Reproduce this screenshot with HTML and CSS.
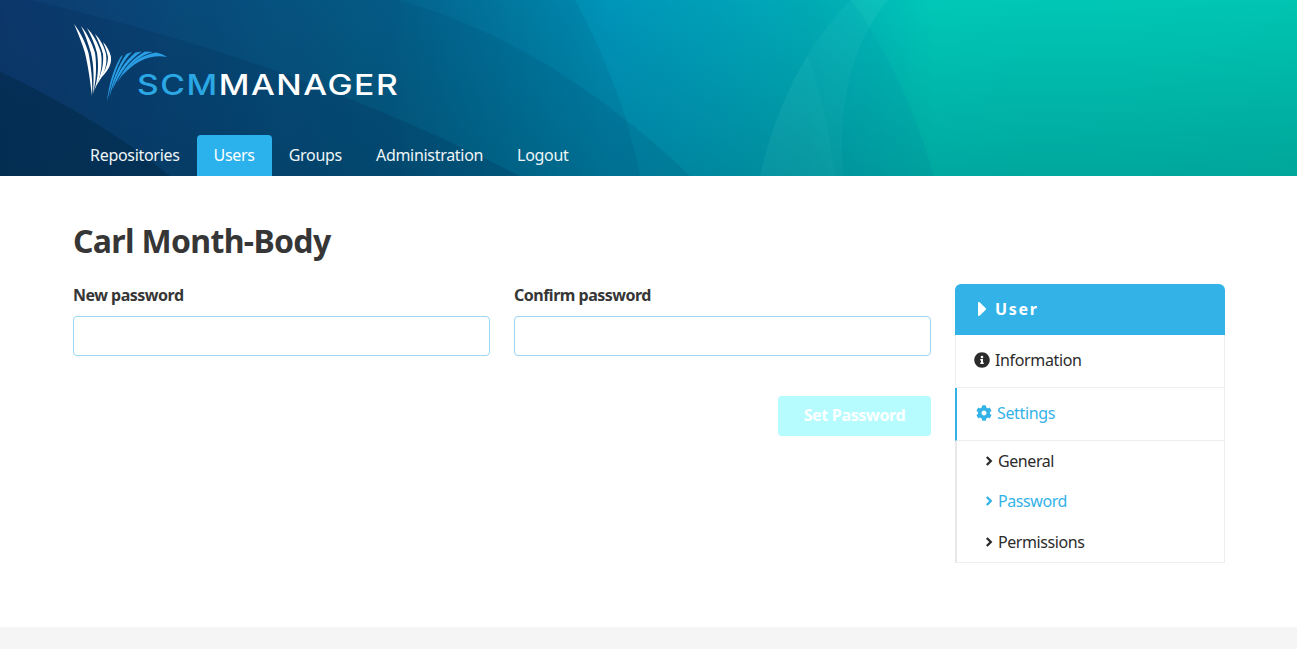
FILE: index.html

```html
<!DOCTYPE html>
<html lang="en">
<head>
  <meta charset="UTF-8" />
  <meta name="viewport" content="width=device-width, initial-scale=1.0"/>
  <title>SCM-Manager</title>
  <link rel="stylesheet" href="styles.css">
</head>
<body>
  <header class="banner">
    <svg class="banner-bg" viewBox="0 0 1297 176" preserveAspectRatio="none" aria-hidden="true">
      <defs>
        <linearGradient id="base" x1="0" y1="0" x2="1297" y2="0" gradientUnits="userSpaceOnUse">
          <stop offset="0" stop-color="#123a74"/>
          <stop offset="0.3" stop-color="#05648f"/>
          <stop offset="0.47" stop-color="#0095ba"/>
          <stop offset="0.62" stop-color="#00aab6"/>
          <stop offset="0.72" stop-color="#00c8b8"/>
          <stop offset="1" stop-color="#00c4b0"/>
        </linearGradient>
        <linearGradient id="shade" x1="0" y1="0" x2="0" y2="176" gradientUnits="userSpaceOnUse">
          <stop offset="0" stop-color="#00283c" stop-opacity="0"/>
          <stop offset="1" stop-color="#00283c" stop-opacity="0.2"/>
        </linearGradient>
      </defs>
      <rect width="1297" height="176" fill="url(#base)"/>
      <path d="M575 0C605 55 628 115 640 176H0V0Z" fill="#003c64" fill-opacity="0.1"/>
      <path d="M397 0C490 25 590 80 690 176H0V0Z" fill="#003c64" fill-opacity="0.13"/>
      <path d="M30 0C200 40 350 90 520 176H0V0Z" fill="#062a58" fill-opacity="0.22"/>
      <path d="M0 72C60 100 120 135 170 176H0Z" fill="#00233f" fill-opacity="0.4"/>
      <path d="M851 0C805 45 775 110 760 176H843C838 110 850 45 888 0Z" fill="#4de0d0" fill-opacity="0.14"/>
      <path d="M785 0C810 50 828 115 835 176H934C915 110 885 45 851 0Z" fill="#00a8b4" fill-opacity="0.3"/>
      <path d="M1041 0C1000 45 980 115 975 176H1297V0Z" fill="#00c8b4" fill-opacity="0.35"/>
      <rect width="1297" height="176" fill="url(#shade)"/>
    </svg>

    <div class="logo">
      <svg class="logo-mark" viewBox="0 0 64 80" aria-hidden="true">
        <g fill="#fff">
          <path d="M1 0C8 9 13 20 15.5 29C18 42 20 58 19 72C17 55 15 42 12 29C9 19 5 9 1 0Z"/>
          <path d="M8 2C14 9 19 19 22 29C24 42 23 58 20 70C21 55 21 42 18 29C15 19 12 10 8 2Z"/>
          <path d="M14 4C20 10 25 19 28 29C30 42 27 55 21 67C25 55 26 42 24 29C22 20 18 12 14 4Z"/>
          <path d="M22 10C27 15 31 22 33 30C35 42 30 52 23 62C28 50 31 42 30 30C28 23 25 16 22 10Z"/>
          <path d="M30 18C34 22 37 28 38 33C39 42 33 49 26 56C31 48 35 42 35 33C34 28 32 23 30 18Z"/>
        </g>
        <g fill="#2b9fe6">
          <path d="M50 31C43 44 38 60 34 78C36 60 40 46 47.5 33Z"/>
          <path d="M59 28C49 38 42 54 36.5 73C39 56 45 42 53.5 30Z"/>
          <path d="M69 27.5C57 35 47 48 39.5 66C43 50 52 37 62.5 28.5Z"/>
          <path d="M80 28C67 31 55 41 44 59C50 45 60 34 72 27.5Z"/>
          <path d="M94 33C78 30 62 37 49 52C56 40 68 31 83 28.5C87 29 91 31 94 33Z"/>
        </g>
      </svg>
      <div class="logo-text"><span class="logo-scm">SCM</span>MANAGER</div>
    </div>

    <nav class="tabs">
      <a class="tab" href="#">Repositories</a>
      <a class="tab active" href="#">Users</a>
      <a class="tab" href="#">Groups</a>
      <a class="tab" href="#">Administration</a>
      <a class="tab" href="#">Logout</a>
    </nav>
  </header>

  <main class="content">
    <h1>Carl Month-Body</h1>
    <div class="columns">
      <form class="password-form">
        <div class="fields">
          <div class="field">
            <label for="newpw">New password</label>
            <input type="password" id="newpw">
          </div>
          <div class="field">
            <label for="confirmpw">Confirm password</label>
            <input type="password" id="confirmpw">
          </div>
        </div>
        <div class="actions">
          <button type="button" class="btn-disabled">Set Password</button>
        </div>
      </form>

      <aside class="menu">
        <div class="menu-head">
          <svg class="ico caret" viewBox="0 108 168 296" preserveAspectRatio="none"><path d="M0 384.662V127.338c0-17.818 21.543-26.741 34.142-14.142l128.662 128.662c7.81 7.81 7.81 20.474 0 28.284L34.142 398.804C21.543 411.404 0 402.48 0 384.662z"/></svg>
          <span>User</span>
        </div>
        <a class="menu-item" href="#">
          <svg class="ico info" viewBox="0 0 512 512"><path d="M256 8C119.043 8 8 119.083 8 256c0 136.997 111.043 248 248 248s248-111.003 248-248C504 119.083 392.957 8 256 8zm0 110c23.196 0 42 18.804 42 42s-18.804 42-42 42-42-18.804-42-42 18.804-42 42-42zm56 254c0 6.627-5.373 12-12 12h-88c-6.627 0-12-5.373-12-12v-24c0-6.627 5.373-12 12-12h12v-64h-12c-6.627 0-12-5.373-12-12v-24c0-6.627 5.373-12 12-12h64c6.627 0 12 5.373 12 12v100h12c6.627 0 12 5.373 12 12v24z"/></svg>
          Information
        </a>
        <a class="menu-item current" href="#">
          <svg class="ico cog" viewBox="0 0 512 512"><path d="M487.4 315.7l-42.6-24.6c4.3-23.2 4.3-47 0-70.2l42.6-24.6c4.9-2.8 7.1-8.6 5.5-14-11.1-35.6-30-67.8-54.7-94.6-3.8-4.1-10-5.1-14.8-2.3L380.8 110c-17.9-15.4-38.5-27.3-60.8-35.1V25.8c0-5.6-3.9-10.5-9.4-11.7-36.7-8.2-74.3-7.8-109.2 0-5.5 1.2-9.4 6.1-9.4 11.7V75c-22.2 7.9-42.8 19.8-60.8 35.1L88.7 85.5c-4.9-2.8-11-1.9-14.8 2.3-24.7 26.7-43.6 58.9-54.7 94.6-1.7 5.4.6 11.2 5.5 14L67.3 221c-4.3 23.2-4.3 47 0 70.2l-42.6 24.6c-4.9 2.8-7.1 8.6-5.5 14 11.1 35.6 30 67.8 54.7 94.6 3.8 4.1 10 5.1 14.8 2.3l42.6-24.6c17.9 15.4 38.5 27.3 60.8 35.1v49.2c0 5.6 3.9 10.5 9.4 11.7 36.7 8.2 74.3 7.8 109.2 0 5.5-1.2 9.4-6.1 9.4-11.7v-49.2c22.2-7.9 42.8-19.8 60.8-35.1l42.6 24.6c4.9 2.8 11 1.9 14.8-2.3 24.7-26.7 43.6-58.9 54.7-94.6 1.5-5.5-.7-11.3-5.6-14.1zM256 336c-44.1 0-80-35.9-80-80s35.9-80 80-80 80 35.9 80 80-35.9 80-80 80z"/></svg>
          Settings
        </a>
        <div class="submenu">
          <a class="sub-item" href="#">
            <svg class="ico chevron" viewBox="0 0 8 10"><path d="M1.8 1L5.8 5L1.8 9"/></svg>
            General
          </a>
          <a class="sub-item current" href="#">
            <svg class="ico chevron" viewBox="0 0 8 10"><path d="M1.8 1L5.8 5L1.8 9"/></svg>
            Password
          </a>
          <a class="sub-item" href="#">
            <svg class="ico chevron" viewBox="0 0 8 10"><path d="M1.8 1L5.8 5L1.8 9"/></svg>
            Permissions
          </a>
        </div>
      </aside>
    </div>
  </main>

  <footer class="page-footer"></footer>
</body>
</html>
```

FILE: styles.css

```css
* {
  box-sizing: border-box;
}
html, body {
  margin: 0;
  padding: 0;
}
body {
  font-family: "Noto Sans", "Open Sans", sans-serif;
  font-size: 16px;
  line-height: 24px;
  color: #363636;
  background: white;
}
a {
  text-decoration: none;
  color: inherit;
}

/* banner */
.banner {
  position: relative;
  height: 176px;
  padding: 24px 73px 0;
  overflow: hidden;
}
.banner-bg {
  position: absolute;
  top: 0;
  left: 0;
  width: 100%;
  height: 100%;
  display: block;
}
.logo {
  position: relative;
  display: flex;
  align-items: flex-end;
  height: 80px;
}
.logo-mark {
  width: 64px;
  height: 80px;
  overflow: visible;
  flex: none;
}
.logo-text {
  font-family: Inter, sans-serif;
  font-size: 28px;
  line-height: 34px;
  font-weight: 500;
  letter-spacing: 1.3px;
  color: white;
  margin-bottom: 2px;
  white-space: nowrap;
  transform: scaleX(1.2);
  transform-origin: left center;
}
.logo-scm {
  color: #2ba7e4;
}
.tabs {
  position: relative;
  display: flex;
  margin-top: 31px;
}
.tab {
  display: block;
  height: 41px;
  padding: 8px 17px;
  color: #eef6f8;
  letter-spacing: -0.3px;
  border-radius: 4px 4px 0 0;
}
.tab.active {
  background: #2bb1ec;
  color: white;
}

/* content */
.content {
  padding: 48px 72px 64px 73px;
}
h1 {
  margin: 0 0 26px;
  font-size: 32px;
  line-height: 34px;
  font-weight: 700;
  letter-spacing: -0.67px;
  color: #363636;
}
.columns {
  display: flex;
  gap: 24px;
}
.password-form {
  flex: 1;
}
.fields {
  display: flex;
  gap: 24px;
}
.field {
  flex: 1;
}
.field label {
  display: block;
  font-weight: 700;
  line-height: 22px;
  letter-spacing: -0.5px;
  margin-bottom: 10px;
}
.field input {
  display: block;
  width: 100%;
  height: 40px;
  border: 1px solid #98d8f3;
  border-radius: 4px;
  background: white;
}
.actions {
  display: flex;
  justify-content: flex-end;
  margin-top: 40px;
}
.btn-disabled {
  width: 153px;
  height: 40px;
  padding: 0 0 2px;
  border: none;
  border-radius: 4px;
  background: #b6fcff;
  color: white;
  font-family: inherit;
  font-size: 16px;
  font-weight: 700;
  letter-spacing: -0.33px;
}

/* side menu */
.menu {
  width: 270px;
  flex: none;
}
.menu-head {
  display: flex;
  align-items: center;
  gap: 9px;
  height: 51px;
  padding: 0 0 2px 23px;
  background: #33b2e8;
  color: white;
  font-weight: 700;
  letter-spacing: 1.7px;
  border-radius: 6px 6px 0 0;
}
.ico {
  display: block;
  fill: currentColor;
  flex: none;
}
.caret {
  width: 8px;
  height: 14px;
}
.menu-item {
  display: flex;
  align-items: center;
  height: 53px;
  padding: 0 0 2px 18px;
  gap: 5px;
  color: #2b2b2b;
  letter-spacing: -0.35px;
  border-right: 1px solid #eee;
  border-left: 1px solid #eee;
  border-bottom: 1px solid #eee;
}
.menu-item.current {
  color: #33b2e8;
  border-left: 2px solid #33b2e8;
  padding-left: 19px;
}
.info {
  width: 16px;
  height: 16px;
}
.cog {
  width: 16px;
  height: 16px;
}
.submenu {
  display: flex;
  flex-direction: column;
  height: 122px;
  border-left: 2px solid #e8e8e8;
  border-right: 1px solid #eee;
  border-bottom: 1px solid #eee;
}
.sub-item {
  flex: 1;
  display: flex;
  align-items: center;
  gap: 5px;
  padding-left: 28px;
  color: #2b2b2b;
  letter-spacing: -0.42px;
}
.sub-item.current {
  color: #33b2e8;
}
.chevron {
  width: 8px;
  height: 10px;
  fill: none;
  stroke: currentColor;
  stroke-width: 2.3;
}

.page-footer {
  height: 22px;
  background: #f5f5f5;
}
```
